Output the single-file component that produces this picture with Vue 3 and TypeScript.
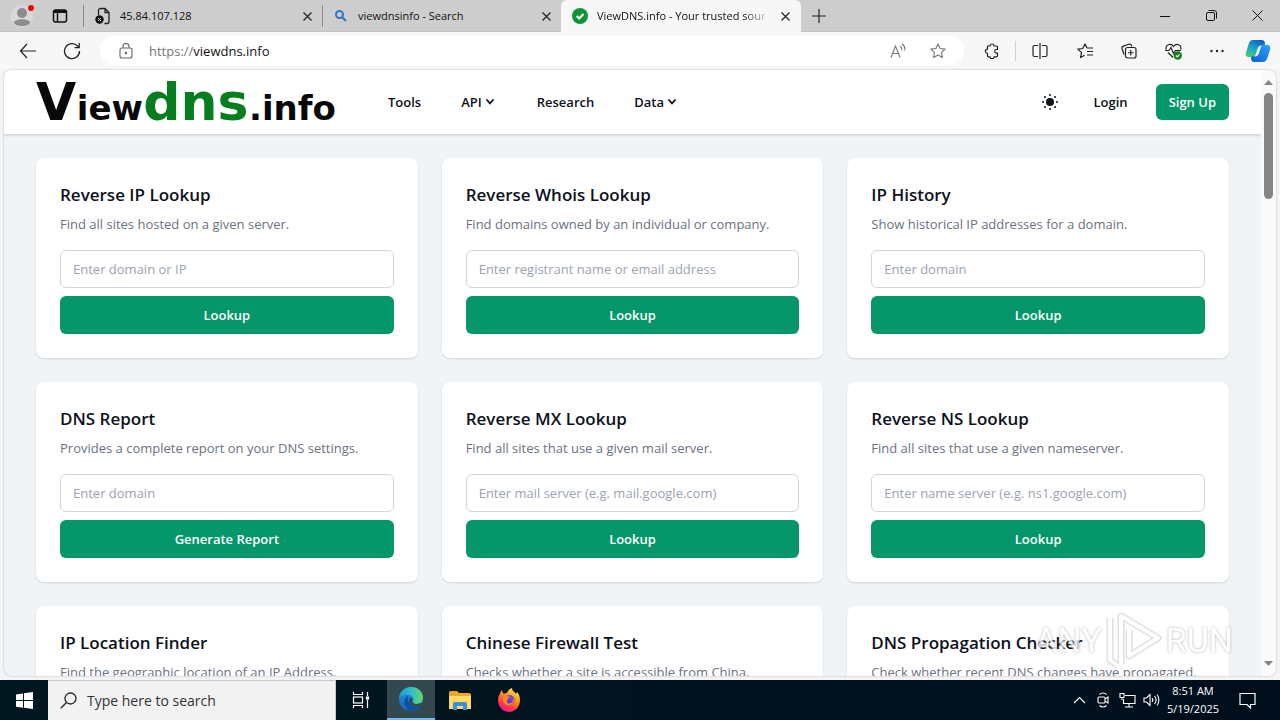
<script setup lang="ts">
import { ref } from 'vue'

interface Tool {
  title: string
  text: string
  hint: string
  action: string
}

const address = ref('viewdns.info')
const tools: Tool[] = [
  { title: 'Reverse IP Lookup', text: 'Find all sites hosted on a given server.', hint: 'Enter domain or IP', action: 'Lookup' },
  { title: 'Reverse Whois Lookup', text: 'Find domains owned by an individual or company.', hint: 'Enter registrant name or email address', action: 'Lookup' },
  { title: 'IP History', text: 'Show historical IP addresses for a domain.', hint: 'Enter domain', action: 'Lookup' },
  { title: 'DNS Report', text: 'Provides a complete report on your DNS settings.', hint: 'Enter domain', action: 'Generate Report' },
  { title: 'Reverse MX Lookup', text: 'Find all sites that use a given mail server.', hint: 'Enter mail server (e.g. mail.google.com)', action: 'Lookup' },
  { title: 'Reverse NS Lookup', text: 'Find all sites that use a given nameserver.', hint: 'Enter name server (e.g. ns1.google.com)', action: 'Lookup' },
  { title: 'IP Location Finder', text: 'Find the geographic location of an IP Address.', hint: 'Enter IP', action: 'Lookup' },
  { title: 'Chinese Firewall Test', text: 'Checks whether a site is accessible from China.', hint: 'Enter domain', action: 'Lookup' },
  { title: 'DNS Propagation Checker', text: 'Check whether recent DNS changes have propagated.', hint: 'Enter domain', action: 'Lookup' },
]
</script>

<template>
  <div class="desktop">
    <div class="tabbar">
      <button class="plain profile" aria-label="Profile">
        <svg width="26" height="26" viewBox="0 0 26 26"><circle cx="12" cy="13" r="11" fill="#d8d8d8" /><circle cx="12" cy="10" r="5" fill="#8c8c8c" /><path d="M4 20c0-5 16-5 16 0-2 4-14 4-16 0z" fill="#8c8c8c" /><circle cx="21" cy="5" r="4" fill="#e7cccc" /><circle cx="21" cy="5" r="3" fill="#e30613" /></svg>
      </button>
      <button class="plain workspaces" aria-label="Tab actions">
        <svg width="16" height="16" viewBox="0 0 16 16" fill="none" stroke="#111" stroke-width="1.5"><rect x="1.5" y="2" width="13" height="12" rx="2" /><path d="M2 3.5h12" stroke-width="3" /><path d="M5.5 5v9" /></svg>
      </button>
      <div class="tab divided">
        <svg width="16" height="18" viewBox="0 0 16 18" fill="none" stroke="#222" stroke-width="1.3"><path d="M3.5 8V3.5a2 2 0 0 1 2-2H10l4 4v9a2 2 0 0 1-2 2H9.500M10 1.500v4h4" /><circle cx="4.500" cy="12.500" r="4.200" fill="#111" stroke="none" /><path d="m3 11 3 3m0-3-3 3" stroke="#ddd" stroke-width="1" /></svg>
        <button class="plain tabname">45.84.107.128</button>
        <button class="plain close" aria-label="Close tab"><svg width="9" height="9" viewBox="0 0 9 9"><path d="m.5.5 8 8m0-8-8 8" stroke="#222" stroke-width="1.200" /></svg></button>
      </div>
      <div class="tab divided">
        <svg width="16" height="16" viewBox="0 0 16 16" fill="none" stroke="#2e7ac4"><circle cx="6.500" cy="6.500" r="3.500" stroke-width="2" /><path d="m9.200 9.200 3.800 3.800" stroke-width="2.200" /></svg>
        <button class="plain tabname">viewdnsinfo - Search</button>
        <button class="plain close" aria-label="Close tab"><svg width="9" height="9" viewBox="0 0 9 9"><path d="m.5.5 8 8m0-8-8 8" stroke="#222" stroke-width="1.200" /></svg></button>
      </div>
      <div class="tab active">
        <svg width="16" height="16" viewBox="0 0 16 16"><circle cx="8" cy="8" r="8" fill="#0f9438" /><path d="m4.700 8 2.500 2.500 4.300-4.500" fill="none" stroke="#fff" stroke-width="2" /></svg>
        <button class="plain tabname faded">ViewDNS.info - Your trusted sour</button>
        <button class="plain close" aria-label="Close tab"><svg width="9" height="9" viewBox="0 0 9 9"><path d="m.5.5 8 8m0-8-8 8" stroke="#222" stroke-width="1.200" /></svg></button>
      </div>
      <button class="plain newtab" aria-label="New tab"><svg width="14" height="14" viewBox="0 0 14 14"><path d="M7 0v14M0 7h14" stroke="#222" stroke-width="1.200" /></svg></button>
      <div class="windowbtns">
        <button class="plain" aria-label="Minimize"><svg width="10" height="10" viewBox="0 0 10 10"><path d="M0 5.500h10" stroke="#111" /></svg></button>
        <button class="plain" aria-label="Restore"><svg width="11" height="11" viewBox="0 0 11 11" fill="none" stroke="#111"><rect x=".5" y="2.500" width="8" height="8" rx="1.500" /><path d="M2.500.5H8a2.500 2.500 0 0 1 2.500 2.500v5.500" /></svg></button>
        <button class="plain" aria-label="Close"><svg width="11" height="11" viewBox="0 0 11 11"><path d="m.5.5 10 10m0-10-10 10" stroke="#111" /></svg></button>
      </div>
    </div>

    <div class="toolbar">
      <button class="plain nav" aria-label="Back"><svg width="18" height="16" viewBox="0 0 18 16" fill="none" stroke="#222" stroke-width="1.200"><path d="M8 1 1.500 8 8 15M1.500 8H17" /></svg></button>
      <button class="plain nav" aria-label="Refresh"><svg width="18" height="18" viewBox="0 0 18 18" fill="none" stroke="#222" stroke-width="1.300"><path d="M16.500 9A7.500 7.500 0 1 1 14.500 4l1.500 1.500M16.200 1v4.700h-4.700" /></svg></button>
      <div class="address">
        <svg class="lock" width="14" height="16" viewBox="0 0 14 16" fill="none" stroke="#666" stroke-width="1.100"><rect x="1" y="5" width="12" height="10" rx="2" /><path d="M4 5V3.500a3 3 0 0 1 6 0V5" /><circle cx="7" cy="10" r=".7" fill="#666" /></svg>
        <label class="scheme" for="url">https://</label>
        <input id="url" v-model="address" type="text" />
        <button class="plain read" aria-label="Read aloud"><svg width="16" height="16" viewBox="0 0 16 16" fill="none" stroke="#777" stroke-width="1.100"><path d="M1 14.500 5.500 3 10 14.500M2.800 10.500h5.400M10 3c1.500 1 2 2.500 1.800 4.200M12 1c2.500 1.500 3.200 4 2.800 6.500" /></svg></button>
        <button class="plain star" aria-label="Favorite"><svg width="16" height="16" viewBox="0 0 16 16" fill="none" stroke="#777" stroke-width="1.100" stroke-linejoin="round"><path d="m8 1 2.100 4.500 5 .6-3.600 3.500.9 4.900L8 12.100l-4.400 2.400.9-4.900L.9 6.100l5-.6z" /></svg></button>
      </div>
      <div class="actions">
        <button class="plain" aria-label="Extensions"><svg width="16" height="16" viewBox="0 0 16 16" fill="none" stroke="#222" stroke-width="1.200" stroke-linejoin="round"><path d="M3.500 3H6a2 2 0 0 1 4 0h2.500a1 1 0 0 1 1 1v2.500h-1a1.800 1.800 0 0 0 0 3.600h1v2.700a1 1 0 0 1-1 1H10a2 2 0 0 1-4 0H4.500a1 1 0 0 1-1-1v-2.500a2.100 2.100 0 1 1 0-4.200z" /></svg></button>
        <button class="plain split" aria-label="Split screen"><svg width="16" height="16" viewBox="0 0 16 16" fill="none" stroke="#222" stroke-width="1.200"><path d="M6 2.500H2.500a1.500 1.500 0 0 0-1.500 1.500v8a1.500 1.500 0 0 0 1.500 1.500H6M10 2.500h3.500A1.500 1.500 0 0 1 15 4v8a1.500 1.500 0 0 1-1.500 1.500H10M8 0v16" /></svg></button>
        <button class="plain" aria-label="Favorites"><svg width="17" height="16" viewBox="0 0 17 16" fill="none" stroke="#222" stroke-width="1.200" stroke-linejoin="round"><path d="m10 5-2-4-2.200 4.500-5 .6 3.700 3.500-.9 4.900 4-2.200M10 5h6M10 8.500h6M10 12h6" /></svg></button>
        <button class="plain" aria-label="Collections"><svg width="16" height="16" viewBox="0 0 16 16" fill="none" stroke="#222" stroke-width="1.200"><path d="M3 11.500 1 5.500a2 2 0 0 1 1.300-2.400L8 1.200a2 2 0 0 1 2.500 1.300l.3 1" /><rect x="4.500" y="4.500" width="10.500" height="10.500" rx="2" /><path d="M9.750 7v5.500M7 9.750h5.500" /></svg></button>
        <button class="plain" aria-label="Browser essentials"><svg width="17" height="17" viewBox="0 0 17 17" fill="none" stroke="#222" stroke-width="1.200"><path d="M1.200 6.500C0 2 5.500-.5 8.500 3.500c3-4 8.500-1.500 7.200 3M3 9.500l5 5M0 7.500h4l2-3 2.500 6 2-3H16" /><circle cx="12.800" cy="12.500" r="4.200" fill="#16821b" stroke="none" /><path d="m11 12.500 1.300 1.300 2.200-2.500" stroke="#fff" /></svg></button>
        <button class="plain" aria-label="More"><svg width="14" height="4" viewBox="0 0 14 4" fill="#222"><circle cx="1.500" cy="2" r="1.200" /><circle cx="7" cy="2" r="1.200" /><circle cx="12.500" cy="2" r="1.200" /></svg></button>
      </div>
      <button class="plain copilot" aria-label="Copilot">
        <svg width="26" height="24" viewBox="0 0 26 24"><defs><linearGradient id="cpa" x1="0" y1="1" x2=".6" y2="0"><stop stop-color="#58d35d" /><stop offset=".55" stop-color="#17a9c7" /><stop offset="1" stop-color="#1463c4" /></linearGradient><linearGradient id="cpb" x1="0" y1="1" x2="1" y2="0"><stop stop-color="#1557d8" /><stop offset="1" stop-color="#25a9f5" /></linearGradient></defs><path d="M8 1h9c2 0 3 2 3 4l-1 2c-3-1-5 0-6 3l-2 6c-1 2-3 3-5 2H4C1 18 0 16 1 13L4 4c1-2 2-3 4-3z" fill="url(#cpa)" /><path d="M18 23H9c-2 0-3-2-3-4l1-2c3 1 5 0 6-3l2-6c1-2 3-3 5-2h2c3 0 4 2 3 5l-3 9c-1 2-2 3-4 3z" fill="url(#cpb)" /><path d="M12.500 10c.5-2 2-3.500 4-3.500L14 14c-.6 2-2 3.500-4 3.500z" fill="#eefaff" /></svg>
      </button>
    </div>

    <div class="viewport">
      <main class="page">
        <header class="siteheader">
          <a class="logo" href="#" aria-label="ViewDNS.info"><span class="big">V</span><span>iew</span><span class="big green">dns</span><span>.info</span></a>
          <nav>
            <a href="#">Tools</a>
            <a href="#" class="drop">API<svg width="8" height="6" viewBox="0 0 8 6"><path d="m1 1 3 3.300L7 1" fill="none" stroke="currentColor" stroke-width="1.800" stroke-linecap="round" /></svg></a>
            <a href="#">Research</a>
            <a href="#" class="drop">Data<svg width="8" height="6" viewBox="0 0 8 6"><path d="m1 1 3 3.300L7 1" fill="none" stroke="currentColor" stroke-width="1.800" stroke-linecap="round" /></svg></a>
          </nav>
          <div class="account">
            <button class="plain" aria-label="Theme"><svg width="16" height="16" viewBox="0 0 16 16" fill="#0c111b"><circle cx="8" cy="8" r="4" /><circle cx="8" cy="1" r="1" /><circle cx="8" cy="15" r="1" /><circle cx="1" cy="8" r="1" /><circle cx="15" cy="8" r="1" /><circle cx="3" cy="3" r="1" /><circle cx="13" cy="3" r="1" /><circle cx="3" cy="13" r="1" /><circle cx="13" cy="13" r="1" /></svg></button>
            <a href="#">Login</a>
            <a href="#" class="signup">Sign Up</a>
          </div>
        </header>
        <div class="cards">
          <form v-for="(tool, i) in tools" :key="tool.title" class="card" @submit.prevent>
            <h2>{{ tool.title }}</h2>
            <label :for="'tool' + i">{{ tool.text }}</label>
            <input :id="'tool' + i" type="text" :placeholder="tool.hint" />
            <button type="submit">{{ tool.action }}</button>
          </form>
        </div>
      </main>
      <div class="scrollbar">
        <svg width="9" height="5" viewBox="0 0 9 5"><path d="M0 5 4.500 0 9 5z" fill="#858585" /></svg>
        <div class="track"><div class="thumb"></div></div>
        <svg width="9" height="5" viewBox="0 0 9 5"><path d="m0 0 4.500 5L9 0z" fill="#858585" /></svg>
      </div>
    </div>

    <div class="taskbar">
      <button class="plain start" aria-label="Start"><svg width="17" height="17" viewBox="0 0 17 17" fill="#fff"><path d="m0 2.400 7-1v6.700H0zM8 1.200 17 0v8.100H8zM0 9h7v6.700l-7-1zM8 9h9v8l-9-1.200z" /></svg></button>
      <div class="search">
        <svg width="17" height="17" viewBox="0 0 17 17" fill="none" stroke="#222" stroke-width="1.300"><circle cx="10.500" cy="6.500" r="5.500" /><path d="M6.500 10.500.7 16.300" /></svg>
        <input type="text" placeholder="Type here to search" aria-label="Type here to search" />
      </div>
      <button class="plain app" aria-label="Task view"><svg width="18" height="16" viewBox="0 0 18 16" fill="none" stroke="#fff" stroke-width="1.200"><path d="M1.500 0v2.500h9V0M1.500 16v-2.500h9V16M15.500 0v4M15.500 8v8" /><rect x="1.500" y="5" width="9" height="6" /><rect x="14.500" y="5" width="2" height="2" fill="#fff" /></svg></button>
      <button class="plain app open" aria-label="Edge">
        <svg width="24" height="24" viewBox="0 0 24 24"><defs><linearGradient id="eda" x1="0" y1="0" x2="1" y2="0"><stop stop-color="#229bd8" /><stop offset=".55" stop-color="#35c1c5" /><stop offset="1" stop-color="#65d957" /></linearGradient><linearGradient id="edb" x1="0" y1="0" x2="0" y2="1"><stop stop-color="#1b9de2" /><stop offset="1" stop-color="#1265bd" /></linearGradient></defs><circle cx="12" cy="12" r="12" fill="url(#edb)" /><path d="M0 11C1 4 6 0 12 0c7 0 12 5 12 10.500 0 4-3 6.500-6.500 6.500-2.500 0-4.500-1-4-2.500 2.500-3-.5-7-4.500-7C5 7.500 1.500 9 0 11z" fill="url(#eda)" /><path d="M9 8.500c-6 4-4 13 3 15.500 4 0 8-2 10-5.500-3 1.500-6 1.500-8.500.5C9 17 8 12 9 8.500z" fill="#104f9f" /><path d="M10.500 11c-1.500 4 1 8.500 6 8.500 2.500 0 4-.5 6-1.500l1.500 3 0-5-6.500 1c-3 0-5-1.500-4-3 1-1.500 0-3.500-3-3z" fill="#34484f" /></svg>
      </button>
      <button class="plain app" aria-label="File Explorer"><svg width="22" height="19" viewBox="0 0 22 19"><path d="M0 2C0 .5 1 0 2 0h6l2 2h10c1 0 2 .7 2 2v14H0z" fill="#e9a921" /><path d="M0 5h22v13H0z" fill="#ffd967" /><path d="M4 19v-6c0-1.500 1-2 2-2h10c1 0 2 .7 2 2v6h-4v-4H8v4z" fill="#398fd8" /></svg></button>
      <button class="plain app" aria-label="Firefox">
        <svg width="24" height="24" viewBox="0 0 24 24"><defs><linearGradient id="ff" x1=".8" y1="0" x2=".3" y2="1"><stop stop-color="#fff04a" /><stop offset=".4" stop-color="#ff980e" /><stop offset=".75" stop-color="#ff3750" /><stop offset="1" stop-color="#e31587" /></linearGradient></defs><path d="M5 2c0 2 1 3 2 4 1-1 2-1 3-1 1-3 3-4.500 5-5 0 3 3 4 4 6l1-2c2 2 3 5 3 8 0 7-5 12-11 12S1 19 1 12c0-3 1-5 2-6 0-2 1-3 2-4z" fill="url(#ff)" /><circle cx="12.500" cy="12" r="5" fill="#7542e5" /><path d="M7 9c2-2 5-1 6 1-2 0-3 1-2 2 2 1 4 0 6-1 0 4-3 7-7 6-3-1-5-5-3-8z" fill="#ff8b18" /><path d="M10.500 11.500c2 1 4 .5 5.500-.5 0 3-2 4.500-4 4.500s-3-2-1.500-4z" fill="#653bd0" /></svg>
      </button>
      <div class="tray">
        <button class="plain" aria-label="Hidden icons"><svg width="13" height="8" viewBox="0 0 13 8"><path d="m1 7 5.500-5.500L12 7" fill="none" stroke="#fff" stroke-width="1.200" /></svg></button>
        <button class="plain" aria-label="Meet now"><svg width="12" height="16" viewBox="0 0 12 16" fill="none" stroke="#fff" stroke-width="1.100"><rect x="1" y="5" width="7" height="6" rx="1" /><path d="m8 7 3-2v6L8 9M2.500 2.500c2-2 5-2 7 0M2.500 13.500c2 2 5 2 7 0" /></svg></button>
        <button class="plain" aria-label="Network"><svg width="17" height="15" viewBox="0 0 17 15" fill="none" stroke="#fff" stroke-width="1.100"><path d="M6 2.500h10v8H4.500V6M10 10.500V14M6 14h8" /><path d="M1 .5h4v4H1zM3 4.500V7" /></svg></button>
        <button class="plain" aria-label="Volume"><svg width="17" height="14" viewBox="0 0 17 14" fill="none" stroke="#fff" stroke-width="1.100"><path d="M1 5v4h2.500L7 12.500v-11L3.500 5zM9 5c1 1.200 1 2.800 0 4M11.500 3c2 2.500 2 5.500 0 8M14 1.500c2.500 3 2.500 8 0 11" /></svg></button>
        <div class="clock"><span>8:51 AM</span><span>5/19/2025</span></div>
        <button class="plain notes" aria-label="Notifications"><svg width="17" height="17" viewBox="0 0 17 17"><path d="M1 1.500h15v11h-4.500v3.500L8 12.500H1z" fill="none" stroke="#fff" stroke-width="1.200" /></svg></button>
      </div>
    </div>

    <div class="watermark">
      <span>ANY</span>
      <svg width="56" height="60" viewBox="0 0 56 60" fill="none" stroke="#fff" stroke-width="4" stroke-linejoin="round"><path d="M15 54V6l37 22-29 18V20M4 8v42l8 6" stroke="#d3d6d8" stroke-width="7" /><path d="M15 54V6l37 22-29 18V20M4 8v42l8 6" /></svg>
      <span>RUN</span>
    </div>
  </div>
</template>

<style>
body { margin: 0; overflow: hidden; }
</style>

<style scoped>
* { box-sizing: border-box; }
.desktop { position: relative; display: flex; flex-direction: column; height: 100vh; background: #f3f4f6; font-family: "Open Sans", "Noto Sans", sans-serif; color: #0c111b; overflow: hidden; }
button, input { font-family: inherit; }
a { color: inherit; text-decoration: none; }
svg { display: block; flex: none; }
.plain { display: flex; align-items: center; justify-content: center; flex: none; padding: 0; border: 0; background: none; color: inherit; }

.tabbar { display: flex; flex: none; height: 32px; background: #cdcdcd; border-bottom: 1px solid #c2c2c2; }
.profile { width: 44px; padding-left: 2px; }
.workspaces { width: 32px; }
.tab { position: relative; display: flex; align-items: center; width: 240px; height: 32px; padding: 0 10px; gap: 9px; margin-left: -1px; }
.tab:first-of-type { margin-left: 7px; padding-left: 11px; }
.divided { border-style: solid; border-width: 0 0 0 1px; border-image: linear-gradient(transparent 6px, #8b8b8b 6px, #8b8b8b 26px, transparent 26px) 1; }
.active { padding-left: 11px; background: #f7f7f7; border-radius: 6px 6px 0 0; }
.tabname { flex: 1; min-width: 0; justify-content: flex-start; overflow: hidden; white-space: nowrap; font-size: 11px; line-height: 20px; color: #111; }
.faded { -webkit-mask-image: linear-gradient(90deg, #000 85%, transparent); mask-image: linear-gradient(90deg, #000 85%, transparent); }
.close { width: 12px; height: 20px; }
.newtab { width: 36px; }
.windowbtns { display: flex; margin-left: auto; }
.windowbtns button { width: 46px; }

.toolbar { display: flex; align-items: center; flex: none; height: 38px; padding: 0 8px 0 6px; background: #f7f7f7; }
.nav { width: 44px; height: 32px; }
.address { display: flex; align-items: center; flex: 1; height: 30px; margin-left: 6px; padding: 0 18px 0 19px; border-radius: 15px; background: #fff; font-size: 13px; }
.scheme { margin-left: 16px; color: #757575; }
.address input { flex: 1; min-width: 0; padding: 0; border: 0; outline: 0; background: none; font-size: 13px; color: #111; }
.read { width: 32px; }
.star { width: 16px; margin-left: 16px; }
.actions { display: flex; margin-left: 6px; }
.actions button { width: 44px; height: 20px; }
.actions .split { width: 48px; border-left: 1px solid #d0d0d0; margin-left: 1px; }
.copilot { width: 28px; margin-left: 5px; }

.viewport { display: flex; flex: 1; min-height: 0; margin: 0 4px 4px; overflow: hidden; border-radius: 8px; background: #f0f4f6; box-shadow: 0 0 2px #aaa; }
.page { flex: 1; min-width: 0; overflow: hidden; }
.siteheader { display: flex; align-items: center; height: 64px; padding: 0 32px; background: #fff; box-shadow: 0 1px 3px #0003; font-size: 13px; font-weight: 600; line-height: 20px; }
.logo { display: flex; align-items: baseline; justify-content: space-between; flex: none; width: 300px; height: 40px; font: bold 34px/40px "DejaVu Sans", sans-serif; color: #080808; }
.logo .big { font-size: 52px; }
.logo .green { color: #087d20; }
nav { display: flex; gap: 40px; margin-left: 52px; }
.drop { display: flex; align-items: center; gap: 4px; padding-right: 3px; }
.account { display: flex; align-items: center; gap: 36px; margin-left: auto; }
.signup { margin-left: -8px; padding: 8px 13px; border-radius: 6px; background: #059669; color: #fff; }
.cards { display: grid; grid-template-columns: repeat(3, minmax(0, 1fr)); gap: 24px; padding: 24px 32px; }
.card { display: flex; flex-direction: column; padding: 24px; border-radius: 8px; background: #fff; box-shadow: 0 1px 2px #0002; }
h2 { margin: 0 0 6px; font-size: 17px; line-height: 26px; font-weight: 600; }
.card label { margin-bottom: 16px; font-size: 13px; line-height: 20px; color: #6b7280; white-space: nowrap; }
.card input { width: 100%; height: 38px; margin-bottom: 8px; padding: 0 12px; border: 1px solid #d1d5db; border-radius: 6px; background: #fff; font-size: 13px; }
.card input::placeholder { color: #9ca3af; opacity: 1; }
.card button { height: 38px; padding: 0; border: 0; border-radius: 6px; background: #059669; color: #fff; font-size: 13px; font-weight: 600; }
.scrollbar { display: flex; flex-direction: column; align-items: center; width: 15px; padding: 10px 0; background: #fafafa; }
.track { flex: 1; margin: 8px 0; }
.thumb { width: 9px; height: 19%; border-radius: 5px; background: #858585; }

.taskbar { display: flex; flex: none; height: 40px; background: linear-gradient(90deg, #001720, #000e1c); color: #fff; }
.start { width: 48px; }
.search { display: flex; align-items: center; width: 288px; padding: 0 12px; gap: 10px; background: #f2f2f2; border: 1px solid #c9c9c9; border-width: 1px 1px 0 0; }
.search input { flex: 1; min-width: 0; padding: 0; border: 0; outline: 0; background: none; font-size: 14px; }
.search input::placeholder { color: #333; opacity: 1; }
.app { width: 48px; margin-left: 1px; }
.open { margin-left: 2px; height: 40px; background: #34484f; border-bottom: 2px solid #76b9ed; }
.tray { display: flex; margin-left: auto; padding-right: 9px; }
.tray button { width: 24px; }
.clock { display: flex; flex-direction: column; align-items: center; width: 60px; padding-top: 2px; font-size: 11px; line-height: 18px; }
.tray .notes { width: 48px; }
.watermark { position: absolute; right: 47px; bottom: 50px; display: flex; align-items: center; gap: 4px; opacity: .75; pointer-events: none; font: 34px/60px "Roboto", sans-serif; color: #fff; text-shadow: 0 0 3px #999; }
</style>
